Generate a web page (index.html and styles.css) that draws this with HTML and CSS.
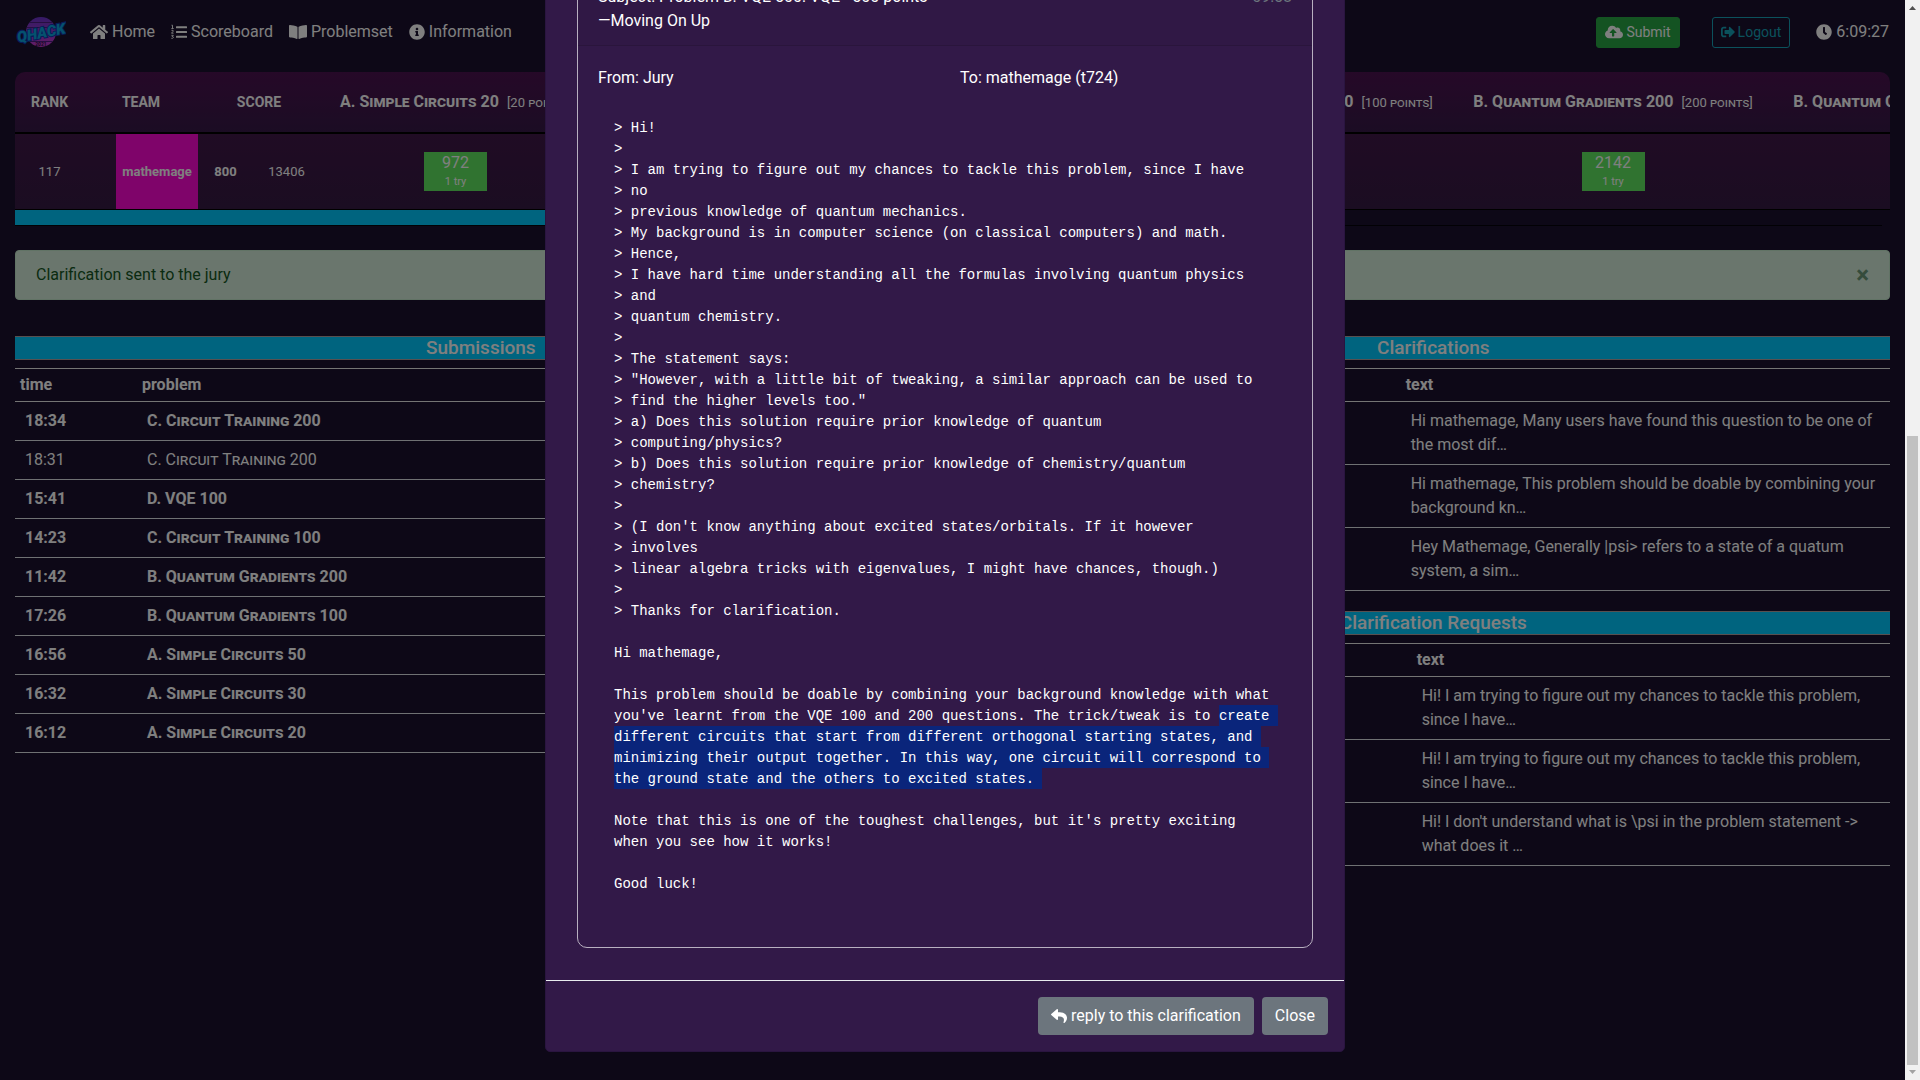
FILE: index.html
```
<!DOCTYPE html>
<html lang="en">
<head>
<meta charset="utf-8">
<meta name="viewport" content="width=device-width, initial-scale=1">
<title>QHack 2021</title>
<link rel="stylesheet" href="styles.css">
</head>
<body>
<div class="page">
  <nav class="navbar">
    <a class="brand" href="#" aria-label="QHack">
      <svg width="50" height="40" viewBox="0 0 50 40">
        <defs>
          <linearGradient id="sun" x1="0" y1="0" x2="0" y2="1">
            <stop offset="0" stop-color="#6a34cc"/>
            <stop offset="1" stop-color="#c83cd0"/>
          </linearGradient>
          <clipPath id="disc"><circle cx="25" cy="20" r="15"/></clipPath>
        </defs>
        <circle cx="25" cy="20" r="15" fill="url(#sun)"/>
        <g clip-path="url(#disc)" fill="#4a2080">
          <rect x="8" y="10" width="34" height="1"/>
          <rect x="8" y="15" width="34" height="1"/>
          <rect x="8" y="29" width="34" height="1"/>
        </g>
        <g transform="rotate(-11 25 20)">
          <text class="logo-word" x="25" y="26" text-anchor="middle">QHACK</text>
        </g>
        <text class="logo-year" x="25" y="34" text-anchor="middle">2021</text>
      </svg>
    </a>
    <div class="nav-links">
      <a class="nav-link" href="#"><svg class="icon icon-18" viewBox="0 0 576 512"><path d="M280.37 148.26L96 300.11V464a16 16 0 0 0 16 16l112.06-.29a16 16 0 0 0 15.92-16V368a16 16 0 0 1 16-16h64a16 16 0 0 1 16 16v95.64a16 16 0 0 0 16 16.05L464 480a16 16 0 0 0 16-16V300L295.67 148.26a12.19 12.19 0 0 0-15.3 0zM571.6 251.47L488 182.56V44.05a12 12 0 0 0-12-12h-56a12 12 0 0 0-12 12v72.61L318.47 43a48 48 0 0 0-61 0L4.34 251.47a12 12 0 0 0-1.6 16.9l25.5 31A12 12 0 0 0 45.15 301l235.22-193.74a12.19 12.19 0 0 1 15.3 0L530.9 301a12 12 0 0 0 16.9-1.6l25.5-31a12 12 0 0 0-1.7-16.93z"/></svg>Home</a>
      <a class="nav-link" href="#"><svg class="icon icon-16" viewBox="0 0 512 512"><path d="M176 72h320a16 16 0 0 1 16 16v32a16 16 0 0 1-16 16H176a16 16 0 0 1-16-16V88a16 16 0 0 1 16-16zM176 224h320a16 16 0 0 1 16 16v32a16 16 0 0 1-16 16H176a16 16 0 0 1-16-16v-32a16 16 0 0 1 16-16zM176 376h320a16 16 0 0 1 16 16v32a16 16 0 0 1-16 16H176a16 16 0 0 1-16-16v-32a16 16 0 0 1 16-16z"/><path class="stroke" d="M16 38h32v98M12 144h72M14 202h52v34l-50 58h66M12 362h62l-36 38c60-10 56 72-26 58"/></svg>Scoreboard</a>
      <a class="nav-link" href="#"><svg class="icon icon-18" viewBox="0 0 576 512"><path d="M542.22 32.05c-54.8 3.11-163.72 14.43-230.96 55.59-4.64 2.84-7.27 7.89-7.27 13.17v363.87c0 11.55 12.63 18.85 23.28 13.49 69.18-34.82 169.23-44.32 218.7-46.92 16.89-.89 30.02-14.43 30.02-30.66V62.75c.01-17.71-15.35-31.74-33.77-30.7zM264.73 87.64C197.5 46.48 88.58 35.17 33.78 32.05 15.36 31.01 0 45.04 0 62.75V400.6c0 16.24 13.13 29.78 30.02 30.66 49.49 2.6 149.59 12.11 218.77 46.95 10.62 5.35 23.21-1.94 23.21-13.46V100.63c0-5.29-2.62-10.14-7.27-12.99z"/></svg>Problemset</a>
      <a class="nav-link" href="#"><svg class="icon icon-16" viewBox="0 0 512 512"><path d="M256 8C119.043 8 8 119.083 8 256c0 136.997 111.043 248 248 248s248-111.003 248-248C504 119.083 392.957 8 256 8zm0 110c23.196 0 42 18.804 42 42s-18.804 42-42 42-42-18.804-42-42 18.804-42 42-42zm56 254c0 6.627-5.373 12-12 12h-88c-6.627 0-12-5.373-12-12v-24c0-6.627 5.373-12 12-12h12v-64h-12c-6.627 0-12-5.373-12-12v-24c0-6.627 5.373-12 12-12h64c6.627 0 12 5.373 12 12v100h12c6.627 0 12 5.373 12 12v24z"/></svg>Information</a>
    </div>
    <div class="nav-actions">
      <button class="btn-sm btn-submit" type="button"><svg class="icon icon-18" viewBox="0 0 640 512"><path d="M537.6 226.6c4.1-10.7 6.4-22.4 6.4-34.6 0-53-43-96-96-96-19.7 0-38.1 6-53.3 16.2C367 64.2 315.3 32 256 32c-88.4 0-160 71.6-160 160 0 2.7.1 5.4.2 8.1C40.2 219.8 0 273.2 0 336c0 79.5 64.5 144 144 144h368c70.7 0 128-57.3 128-128 0-61.9-44-113.6-102.4-125.4zM393.4 288H328v112c0 8.8-7.2 16-16 16h-48c-8.8 0-16-7.2-16-16V288h-65.4c-14.3 0-21.4-17.2-11.3-27.3l105.4-105.4c6.2-6.2 16.4-6.2 22.6 0l105.4 105.4c10.1 10.1 2.9 27.3-11.3 27.3z"/></svg>Submit</button>
      <button class="btn-sm btn-logout" type="button"><svg class="icon icon-14" viewBox="0 0 512 512"><path d="M497 273L329 441c-15 15-41 4.500-41-17v-96H152c-13.300 0-24-10.700-24-24v-96c0-13.300 10.700-24 24-24h136V88c0-21.400 25.900-32 41-17l168 168c9.300 9.400 9.300 24.600 0 34zM192 436v-40c0-6.600-5.400-12-12-12H96c-17.700 0-32-14.300-32-32V160c0-17.700 14.300-32 32-32h84c6.600 0 12-5.400 12-12V76c0-6.600-5.400-12-12-12H96c-53 0-96 43-96 96v192c0 53 43 96 96 96h84c6.600 0 12-5.400 12-12z"/></svg>Logout</button>
      <span class="clock"><svg class="icon icon-16" viewBox="0 0 512 512"><path d="M256,8C119,8,8,119,8,256S119,504,256,504,504,393,504,256,393,8,256,8Zm92.49,313h0l-20,25a16,16,0,0,1-22.49,2.5h0l-67-49.72a40,40,0,0,1-15-31.23V112a16,16,0,0,1,16-16h32a16,16,0,0,1,16,16V256l58,42.5A16,16,0,0,1,348.49,321Z"/></svg>6:09:27</span>
    </div>
  </nav>

  <main class="content">
    <div class="score-wrap">
      <table class="scoreboard">
        <colgroup>
          <col class="c-rank"><col class="c-flag"><col class="c-team"><col class="c-points"><col class="c-time">
          <col class="c-short"><col class="c-short"><col class="c-short">
          <col class="c-long"><col class="c-long"><col class="c-long">
        </colgroup>
        <thead>
          <tr>
            <th>RANK</th><th colspan="2">TEAM</th><th colspan="2">SCORE</th>
            <th class="prob">A. Simple Circuits 20 <span class="pts">[20 points]</span></th>
            <th></th>
            <th></th>
            <th class="prob">B. Quantum Gradients 100 <span class="pts">[100 points]</span></th>
            <th class="prob">B. Quantum Gradients 200 <span class="pts">[200 points]</span></th>
            <th class="prob">B. Quantum Gradients 500 <span class="pts">[500 points]</span></th>
          </tr>
        </thead>
        <tbody>
          <tr>
            <td>117</td><td></td><td class="team">mathemage</td><td class="total">800</td><td>13406</td>
            <td><div class="solved">972<span>1 try</span></div></td>
            <td></td><td></td><td></td>
            <td><div class="solved">2142<span>1 try</span></div></td>
            <td></td>
          </tr>
        </tbody>
      </table>
    </div>
    <div class="progress"><div class="progress-fill"></div></div>
    <hr class="rule">

    <div class="alert">
      <span>Clarification sent to the jury</span>
      <button class="alert-close" type="button" aria-label="Dismiss">×</button>
    </div>

    <div class="columns">
      <section>
        <h1 class="section-title">Submissions</h1>
        <table class="list">
          <colgroup><col class="c-when"><col></colgroup>
          <thead><tr><th>time</th><th>problem</th></tr></thead>
          <tbody class="subs">
            <tr><td>18:34</td><td>C. Circuit Training 200</td></tr>
            <tr class="seen"><td>18:31</td><td>C. Circuit Training 200</td></tr>
            <tr><td>15:41</td><td>D. VQE 100</td></tr>
            <tr><td>14:23</td><td>C. Circuit Training 100</td></tr>
            <tr><td>11:42</td><td>B. Quantum Gradients 200</td></tr>
            <tr><td>17:26</td><td>B. Quantum Gradients 100</td></tr>
            <tr><td>16:56</td><td>A. Simple Circuits 50</td></tr>
            <tr><td>16:32</td><td>A. Simple Circuits 30</td></tr>
            <tr><td>16:12</td><td>A. Simple Circuits 20</td></tr>
          </tbody>
        </table>
      </section>
      <section>
        <h1 class="section-title">Clarifications</h1>
        <table class="list">
          <colgroup><col class="c-meta"><col></colgroup>
          <thead><tr><th></th><th>text</th></tr></thead>
          <tbody>
            <tr><td></td><td>Hi mathemage, Many users have found this question to be one of the most dif…</td></tr>
            <tr><td></td><td>Hi mathemage, This problem should be doable by combining your background kn…</td></tr>
            <tr><td></td><td>Hey Mathemage, Generally |psi&gt; refers to a state of a quatum system, a sim…</td></tr>
          </tbody>
        </table>
        <h1 class="section-title">Clarification Requests</h1>
        <table class="list">
          <colgroup><col class="c-meta-wide"><col></colgroup>
          <thead><tr><th></th><th>text</th></tr></thead>
          <tbody>
            <tr><td></td><td>Hi! I am trying to figure out my chances to tackle this problem, since I have…</td></tr>
            <tr><td></td><td>Hi! I am trying to figure out my chances to tackle this problem, since I have…</td></tr>
            <tr><td></td><td>Hi! I don't understand what is \psi in the problem statement -&gt; what does it …</td></tr>
          </tbody>
        </table>
      </section>
    </div>
  </main>
</div>

<div class="backdrop">
  <div class="modal" role="dialog" aria-label="Clarification">
    <div class="modal-body">
      <article class="card">
        <header class="card-header">
          <div>Subject: Problem D. VQE 500: VQE - 500 points<br>—Moving On Up</div>
          <div class="muted">09:58</div>
        </header>
        <div class="card-body">
          <div class="parties"><div>From: Jury</div><div>To: mathemage (t724)</div></div>
<pre class="message">&gt; Hi!
&gt;
&gt; I am trying to figure out my chances to tackle this problem, since I have
&gt; no
&gt; previous knowledge of quantum mechanics.
&gt; My background is in computer science (on classical computers) and math.
&gt; Hence,
&gt; I have hard time understanding all the formulas involving quantum physics
&gt; and
&gt; quantum chemistry.
&gt;
&gt; The statement says:
&gt; "However, with a little bit of tweaking, a similar approach can be used to
&gt; find the higher levels too."
&gt; a) Does this solution require prior knowledge of quantum
&gt; computing/physics?
&gt; b) Does this solution require prior knowledge of chemistry/quantum
&gt; chemistry?
&gt;
&gt; (I don't know anything about excited states/orbitals. If it however
&gt; involves
&gt; linear algebra tricks with eigenvalues, I might have chances, though.)
&gt;
&gt; Thanks for clarification.

Hi mathemage,

This problem should be doable by combining your background knowledge with what
you've learnt from the VQE 100 and 200 questions. The trick/tweak is to <mark>create 
different circuits that start from different orthogonal starting states, and 
minimizing their output together. In this way, one circuit will correspond to 
the ground state and the others to excited states. </mark>

Note that this is one of the toughest challenges, but it's pretty exciting
when you see how it works!

Good luck!</pre>
        </div>
      </article>
    </div>
    <footer class="modal-footer">
      <button class="btn" type="button"><svg class="icon icon-16" viewBox="0 0 512 512"><path d="M8.309 189.836L184.313 37.851C199.719 24.546 224 35.347 224 56.015v80.053c160.629 1.839 288 34.032 288 186.258 0 61.441-39.581 122.309-83.333 154.132-13.653 9.931-33.111-2.533-28.077-18.631 45.344-145.012-21.507-183.510-176.590-185.742V360c0 20.700-24.300 31.453-39.687 18.164l-176.004-152c-11.071-9.562-11.086-26.753 0-36.328z"/></svg>reply to this clarification</button>
      <button class="btn" type="button">Close</button>
    </footer>
  </div>
</div>

<div class="scrollbar" aria-hidden="true">
  <svg width="15" height="17" viewBox="0 0 15 17"><path fill="#505050" d="M4 10h7L7.500 6z"/></svg>
  <div class="track"><div class="thumb"></div></div>
  <svg width="15" height="15" viewBox="0 0 15 15"><path fill="#a3a3a3" d="M4 5h7L7.500 9z"/></svg>
</div>
</body>
</html>
```
FILE: styles.css
```
* { box-sizing: border-box; }

html, body { height: 100%; }

body {
  margin: 0;
  overflow: hidden;
  background: #1a102e;
  color: #fff;
  font: 16px/24px Roboto, sans-serif;
}

.page { margin-right: 15px; }

.icon { fill: currentColor; flex: none; }
.icon-18 { width: 18px; height: 16px; }
.icon-16 { width: 16px; height: 16px; }
.icon-14 { width: 14px; height: 14px; }
.icon .stroke { fill: none; stroke: currentColor; stroke-width: 30; }

/* Navigation */
.navbar {
  display: flex;
  align-items: center;
  height: 64px;
  padding: 0 16px;
}
.brand { display: block; width: 50px; height: 40px; margin-right: 16px; }
.logo-word {
  font: italic 900 15px Roboto, sans-serif;
  fill: #0aa5dc;
  stroke: #1038b0;
  stroke-width: 2px;
  paint-order: stroke;
}
.logo-year { font: bold 5px Roboto, sans-serif; fill: #2a1040; }
.nav-links { display: flex; flex: 1; }
.nav-link {
  display: flex;
  align-items: center;
  gap: 4px;
  padding: 8px;
  color: #fff;
  text-decoration: none;
}
.nav-actions { display: flex; align-items: center; gap: 32px; }
.btn-sm {
  display: flex;
  align-items: center;
  gap: 3px;
  height: 31px;
  padding: 0 8px;
  border: 1px solid;
  border-radius: 3px;
  font: 14px/21px Roboto, sans-serif;
}
.btn-submit { background: #28a745; border-color: #28a745; color: #fff; }
.btn-logout { background: none; border-color: #17a2b8; color: #17a2b8; }
.clock { display: flex; align-items: center; gap: 4px; margin-left: -6px; }

.content { padding: 8px 15px 0; }

/* Scoreboard */
.score-wrap { overflow: hidden; border-radius: 10px 10px 0 0; }
.scoreboard {
  width: 2078px;
  table-layout: fixed;
  border-collapse: separate;
  border-spacing: 0;
  font-size: 13px;
  text-align: center;
}
.c-rank { width: 69px; }
.c-flag { width: 32px; }
.c-team { width: 82px; }
.c-points { width: 55px; }
.c-time { width: 67px; }
.c-short { width: 271px; }
.c-long { width: 320px; }
.scoreboard th, .scoreboard td { padding: 0; white-space: nowrap; }
.scoreboard thead tr { background: linear-gradient(#4c1250, #361a48); }
.scoreboard tbody tr { background: linear-gradient(#401848, #361a44); }
.scoreboard th { height: 62px; border-bottom: 2px solid #000; font-size: 14px; }
.scoreboard td { height: 76px; border-bottom: 1px solid #000; }
.scoreboard .prob { font-size: 16px; font-variant: small-caps; }
.pts { margin-left: 4px; font-size: 13px; font-weight: 400; }
.scoreboard .team { background: #ff08d4; font-weight: 700; }
.total { font-weight: 700; }
.solved {
  width: 63px;
  height: 39px;
  margin: 0 auto;
  background: #60e760;
  font-size: 16px;
  line-height: 21px;
}
.solved span { display: block; font-size: 11px; line-height: 18px; }

.progress { height: 15px; }
.progress-fill { width: 50%; height: 100%; background: #00c8ff; }
.rule { height: 1px; margin: 0 8px 24px 0; border: 0; background: #04020a; }

.alert {
  display: flex;
  justify-content: space-between;
  align-items: center;
  height: 50px;
  padding: 0 20px;
  border: 1px solid #c3e6cb;
  border-radius: 4px;
  background: #d4edda;
  color: #155724;
}
.alert-close {
  padding: 0;
  border: 0;
  background: none;
  color: #6a9878;
  font: bold 24px/24px Roboto, sans-serif;
}

/* Lists */
.columns { display: grid; grid-template-columns: 51fr 50fr; gap: 30px; margin-top: 36px; }
.section-title {
  margin: 0 0 8px;
  border: solid #b0a0a0;
  border-width: 1px 0;
  background: #00c8ff;
  color: #fff;
  font-size: 19px;
  font-weight: 500;
  line-height: 22px;
  text-align: center;
}
.list {
  width: 100%;
  margin-bottom: 20px;
  table-layout: fixed;
  border-collapse: collapse;
}
.c-when { width: 122px; }
.c-meta { width: 424px; }
.c-meta-wide { width: 435px; }
.list th { height: 33px; padding: 4px 5px; border: solid #e8e8e8; border-width: 1px 0; text-align: left; }
.list td { padding: 7px 0 7px 10px; border-bottom: 1px solid #dee2e6; }
.subs { font-weight: 700; font-variant: small-caps; }
.subs .seen { font-weight: 400; }

/* Dialog */
.backdrop {
  position: fixed;
  inset: 0 15px 0 0;
  display: flex;
  justify-content: center;
  align-items: flex-end;
  overflow: hidden;
  padding: 0 15px 28px 0;
  background: rgba(0, 0, 0, 0.5);
}
.modal {
  width: 800px;
  border: 1px solid #2a1540;
  border-radius: 5px;
  background: #321948;
}
.modal-body { padding: 16px 31px 32px; }
.card { border: 1px solid #b8b0c0; border-radius: 10px; }
.card-header {
  display: flex;
  justify-content: space-between;
  padding: 12px 20px;
  border-bottom: 1px solid rgba(0, 0, 0, 0.125);
  background: rgba(0, 0, 0, 0.03);
}
.muted { color: #6c757d; }
.card-body { padding: 20px; }
.parties { display: grid; grid-template-columns: 1fr 1fr; column-gap: 30px; }
.message {
  margin: 28px 16px 32px;
  font: 14px/21px "Liberation Mono", monospace;
}
.message mark { padding: 3px 0 2px; background: #0a257b; color: inherit; }
.modal-footer {
  display: flex;
  justify-content: flex-end;
  gap: 8px;
  padding: 16px;
  border-top: 1px solid #e9ecef;
}
.btn {
  display: flex;
  align-items: center;
  gap: 4px;
  height: 38px;
  padding: 0 13px;
  border: 0;
  border-radius: 4px;
  background: #6c757d;
  color: #fff;
  font: 16px/24px Roboto, sans-serif;
}

/* Window scrollbar */
.scrollbar {
  position: fixed;
  inset: 0 0 0 auto;
  display: flex;
  flex-direction: column;
  width: 15px;
  background: #f1f1f1;
}
.scrollbar svg { display: block; }
.track { display: flex; flex: 1; align-items: flex-end; padding: 0 2px; }
.thumb { width: 100%; height: 60%; background: #c1c1c1; }
```
